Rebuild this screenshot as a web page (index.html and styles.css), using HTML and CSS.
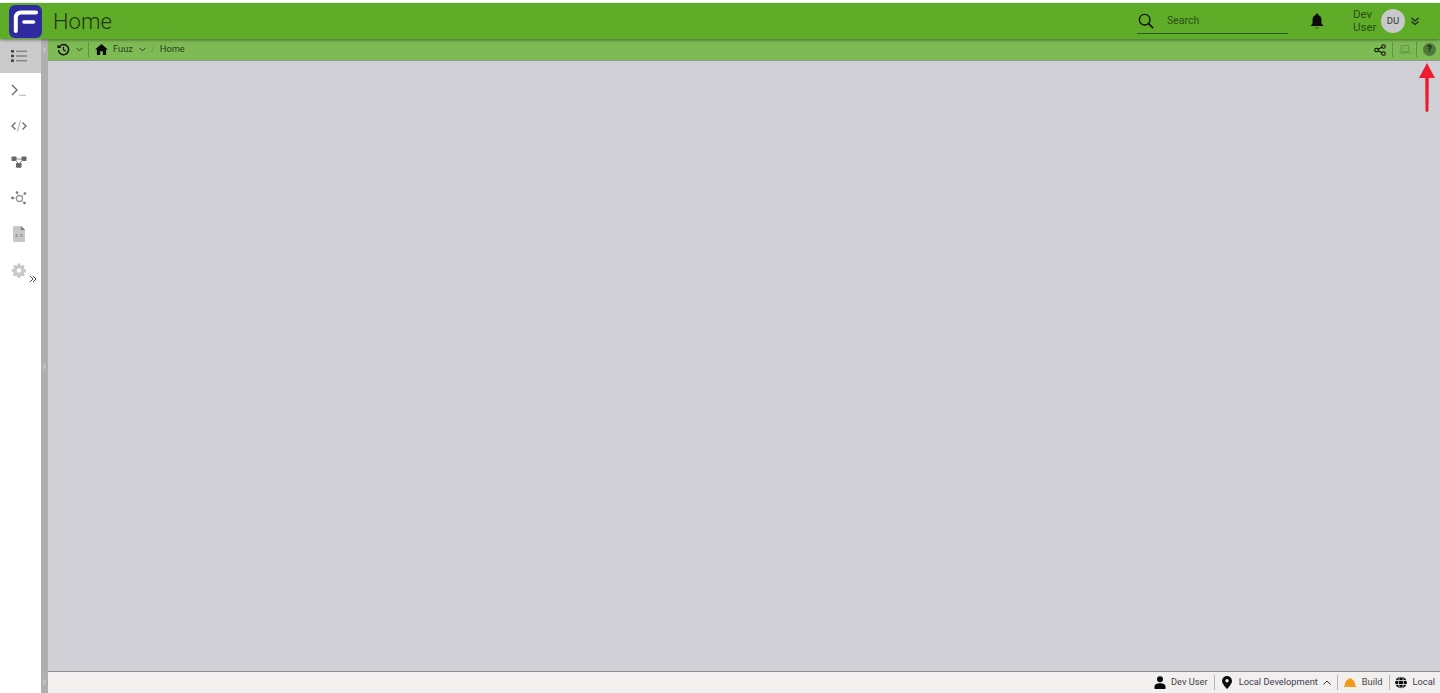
FILE: index.html
```html
<!DOCTYPE html>
<html lang="en">
<head>
  <meta charset="UTF-8" />
  <title>Fuuz — Home</title>
  <link rel="stylesheet" href="styles.css">
</head>
<body>
  <div class="header">
    <svg class="logo" viewBox="0 0 33 33">
      <rect width="33" height="33" rx="6" fill="#2e2ba0"/>
      <path d="M6.800 26V13q0-5.500 5.500-5.500H27" fill="none" stroke="#fff" stroke-width="4" stroke-linecap="round"/>
      <path d="M15 17H24.500" fill="none" stroke="#fff" stroke-width="3.600" stroke-linecap="round"/>
    </svg>
    <div class="page-title">Home</div>
    <div class="search">
      <svg class="search-icon" viewBox="0 0 18 18"><circle cx="7.500" cy="7.500" r="6" fill="none" stroke="#111" stroke-width="1.500"/><path d="M12 12l5 5" stroke="#111" stroke-width="1.800"/></svg>
      <span>Search</span>
    </div>
    <svg class="bell" viewBox="0 0 14 16"><path d="M7 0.500a1.200 1.200 0 0 1 1.200 1.400C10.500 2.500 11.500 4.500 11.500 7v3.500L13.500 13H0.500l2-2.500V7c0-2.500 1-4.500 3.300-5.100A1.200 1.200 0 0 1 7 0.500z" fill="#0c0c0c"/><path d="M5.500 14h3a1.500 1.500 0 0 1-3 0z" fill="#3a6a1a"/></svg>
    <div class="user-name">Dev<br>User</div>
    <div class="avatar">DU</div>
    <svg class="double-chev" viewBox="0 0 10 10"><path d="M1.500 2l3.500 3 3.500-3M1.500 5.500l3.500 3 3.500-3" fill="none" stroke="#222" stroke-width="1.200"/></svg>
  </div>

  <div class="content-row">
    <div class="sidebar">
      <div class="nav-item active">
        <svg viewBox="0 0 16 12"><g fill="#444"><rect x="0" y="0" width="3" height="2.500"/><rect x="0" y="4.700" width="3" height="2.500"/><rect x="0" y="9.400" width="3" height="2.500"/></g><g fill="#888"><rect x="5" y="0.500" width="11" height="1.600"/><rect x="5" y="5.200" width="11" height="1.600"/><rect x="5" y="9.900" width="11" height="1.600"/></g></svg>
      </div>
      <div class="nav-item">
        <svg viewBox="0 0 16 12"><path d="M1 1l5 5-5 5" fill="none" stroke="#666" stroke-width="1.300"/><path d="M8 11.300h7" stroke="#bbb" stroke-width="1.200"/></svg>
      </div>
      <div class="nav-item">
        <svg viewBox="0 0 16 12"><path d="M4.500 2.500L1 6l3.500 3.500M11.500 2.500L15 6l-3.500 3.500" fill="none" stroke="#666" stroke-width="1.300"/><path d="M9.500 0.500L6.500 11.500" stroke="#aaa" stroke-width="1"/></svg>
      </div>
      <div class="nav-item">
        <svg viewBox="0 0 16 12"><g fill="#666"><rect x="0.500" y="0.500" width="5" height="4.500" rx="0.800"/><rect x="10.500" y="0.500" width="5" height="4.500" rx="0.800"/><rect x="5" y="7" width="5.500" height="4.800" rx="0.800"/></g><path d="M5 3h6M4 4l3 3M12 4l-3 3" stroke="#888" stroke-width="1"/></svg>
      </div>
      <div class="nav-item tall">
        <svg viewBox="0 0 16 14"><circle cx="8.500" cy="7.500" r="3" fill="none" stroke="#999" stroke-width="1.300"/><path d="M2 7h3.500M6 2l1.500 3M13.500 3l-3 2.500M13 11.500l-2.500-2" stroke="#aaa" stroke-width="0.800"/><g fill="#777"><circle cx="1.500" cy="7" r="1.400"/><circle cx="6" cy="1.500" r="1.300"/><circle cx="14" cy="2.500" r="1.300"/><circle cx="13.500" cy="12" r="1.300"/></g></svg>
      </div>
      <div class="nav-item">
        <svg viewBox="0 0 12 16" class="doc-icon"><path d="M1 0h7l4 4v11a1 1 0 0 1-1 1H1a1 1 0 0 1-1-1V1a1 1 0 0 1 1-1z" fill="#c8c8c8"/><path d="M8 0l4 4H8z" fill="#777"/><path d="M4.500 8L3 9.500 4.500 11M7.500 8L9 9.500 7.500 11" fill="none" stroke="#666" stroke-width="0.900"/></svg>
      </div>
      <div class="nav-item">
        <svg viewBox="0 0 16 16" class="gear-icon"><path d="M6.500 0h3l.4 2.100 1.500.7L13.300 1.600l2.100 2.100-1.200 1.900.7 1.500 2.100.4v3l-2.100.4-.7 1.500 1.200 1.900-2.100 2.100-1.900-1.200-1.500.7-.4 2.100h-3l-.4-2.100-1.500-.7-1.900 1.200L.4 14.200l1.200-1.900-.7-1.500L-1 10.400v-3l2.100-.4.700-1.500L.6 3.700l2.100-2.100 1.900 1.200 1.500-.7z" transform="translate(1.500 1.500) scale(.8)" fill="#c8c8c8"/><circle cx="8" cy="8.500" r="2.300" fill="#fff"/></svg>
      </div>
      <svg class="sidebar-expand" viewBox="0 0 8 8"><path d="M1 1l3 3-3 3M4 1l3 3-3 3" fill="none" stroke="#444" stroke-width="1"/></svg>
    </div>

    <div class="strip">
      <span class="strip-arrow top">›</span>
      <span class="strip-arrow mid">›</span>
      <span class="strip-arrow bottom">›</span>
    </div>

    <div class="main">
      <div class="toolbar">
        <svg class="tb-history" viewBox="0 0 14 14"><path d="M2.500 4A5.500 5.500 0 1 1 1.500 7.500" fill="none" stroke="#111" stroke-width="1.500"/><path d="M0.500 1.500L5 5.500 0.500 5.500z" fill="#111"/><path d="M7 4v3.500l2.500 1.500" fill="none" stroke="#111" stroke-width="1.300"/></svg>
        <svg class="chev" viewBox="0 0 8 5"><path d="M0.500 0.500L4 4l3.500-3.500" fill="none" stroke="#333" stroke-width="1.100"/></svg>
        <div class="tb-sep"></div>
        <svg class="tb-home" viewBox="0 0 14 12"><path d="M7 0L0 6h2v6h3.500V8h3v4H12V6h2z" fill="#0a0a0a"/></svg>
        <span class="crumb">Fuuz</span>
        <svg class="chev crumb-chev" viewBox="0 0 8 5"><path d="M0.500 0.500L4 4l3.500-3.500" fill="none" stroke="#333" stroke-width="1.100"/></svg>
        <span class="crumb-slash">/</span>
        <span class="crumb">Home</span>
        <div class="toolbar-right">
          <svg class="tb-share" viewBox="0 0 12 12"><g fill="none" stroke="#111" stroke-width="1.100"><circle cx="2.500" cy="6" r="1.800"/><circle cx="9.500" cy="2.500" r="1.800"/><circle cx="9.500" cy="9.500" r="1.800"/><path d="M4 5.200l4-2M4 6.800l4 2"/></g></svg>
          <div class="tb-sep"></div>
          <svg class="tb-laptop" viewBox="0 0 14 10"><path d="M2.500 0.500h9v7h-9z" fill="none" stroke="#5c8f45" stroke-width="1"/><path d="M0 8.500h14v1H0z" fill="#5c8f45"/><path d="M5 3v1.500M9 3v1.500" stroke="#5c8f45"/></svg>
          <div class="tb-sep"></div>
          <div class="help">?</div>
        </div>
      </div>

      <div class="canvas"></div>

      <div class="footer">
        <div class="foot-item foot-user">
          <svg class="foot-icon" viewBox="0 0 12 13"><circle cx="6" cy="3.200" r="3" fill="#0a0a0a"/><path d="M0.500 13v-2.500C0.500 8.500 3 7.300 6 7.300s5.500 1.200 5.500 3.200V13z" fill="#0a0a0a"/></svg>
          <span>Dev User</span>
        </div>
        <div class="foot-item">
          <svg class="foot-icon" viewBox="0 0 10 13"><path d="M5 0a5 5 0 0 1 5 5c0 3-5 8-5 8S0 8 0 5a5 5 0 0 1 5-5z" fill="#0a0a0a"/><circle cx="5" cy="4.800" r="1.700" fill="#f1f0ee"/></svg>
          <span class="foot-env">Local Development</span>
          <svg class="foot-chev" viewBox="0 0 8 5"><path d="M0.500 4.500L4 1l3.500 3.500" fill="none" stroke="#333" stroke-width="1"/></svg>
        </div>
        <div class="foot-item foot-build">
          <svg class="foot-icon" viewBox="0 0 13 13"><path d="M1 10V8.500C1 5.500 2.800 3.500 5 3V2h3v1c2.200.5 4 2.500 4 5.500V10z" fill="#f29a18"/><rect x="0" y="9.500" width="13" height="2" rx="1" fill="#f29a18"/></svg>
          <span>Build</span>
        </div>
        <div class="foot-item foot-local">
          <svg class="foot-icon" viewBox="0 0 12 12"><circle cx="6" cy="6" r="5.800" fill="#0a0a0a"/><g fill="none" stroke="#f1f0ee" stroke-width="0.800"><ellipse cx="6" cy="6" rx="2.500" ry="5.800"/><path d="M0 4h12M0 8h12"/></g></svg>
          <span class="foot-env">Local</span>
        </div>
      </div>
    </div>
  </div>

  <svg class="red-arrow" viewBox="0 0 16 50"><path d="M8 0L16 15H9.800L9.500 48q-1.500 2-3 0L6.200 15H0z" fill="#ee1c2e"/></svg>
</body>
</html>
```

FILE: styles.css
```css
html, body {
  height: 100%;
}
body {
  margin: 0;
  height: 693px;
  overflow: hidden;
  display: flex;
  flex-direction: column;
  padding-top: 3px;
  box-sizing: border-box;
  background-color: #fff;
  font-family: Roboto, "Liberation Sans", sans-serif;
  color: #222;
}
svg {
  display: block;
  flex-shrink: 0;
}

/* top bar */
.header {
  height: 36px;
  flex-shrink: 0;
  display: flex;
  align-items: center;
  background-color: #5fac28;
  box-shadow: 0 1px 3px rgba(0, 0, 0, 0.45);
  position: relative;
  z-index: 2;
}
.logo {
  width: 33px;
  height: 33px;
  margin-left: 9px;
}
.page-title {
  font-size: 22px;
  font-weight: 300;
  margin-left: 11px;
  color: #1f3514;
}
.search {
  margin-left: auto;
  width: 151px;
  height: 25px;
  display: flex;
  align-items: center;
  gap: 13px;
  border-bottom: 1px solid #2d5a14;
  font-size: 10.500px;
  color: #2c4f1a;
}
.search-icon {
  width: 16px;
  height: 16px;
  margin-left: 1px;
}
.bell {
  width: 14px;
  height: 16px;
  margin-left: 22px;
}
.user-name {
  width: 23px;
  margin-left: 29px;
  font-size: 11.500px;
  line-height: 13px;
  color: #2c4f1a;
}
.avatar {
  width: 24px;
  height: 24px;
  margin-left: 5px;
  border-radius: 50%;
  background-color: #c9c9cb;
  font-size: 9.500px;
  line-height: 24px;
  text-align: center;
  color: #333;
}
.double-chev {
  width: 10px;
  height: 10px;
  margin: 0 20px 0 5px;
}

/* body area */
.content-row {
  flex: 1;
  min-height: 0;
  display: flex;
}
.sidebar {
  width: 41px;
  flex-shrink: 0;
  position: relative;
  background-color: #fff;
}
.nav-item {
  height: 36px;
  box-sizing: border-box;
  padding: 0 3px 2px 0;
  display: flex;
  align-items: center;
  justify-content: center;
}
.nav-item svg {
  width: 16px;
  height: 12px;
}
.nav-item.active {
  height: 34px;
  padding-bottom: 0;
  background-color: #cbcbcb;
}
.nav-item.tall svg {
  height: 14px;
}
.nav-item .doc-icon {
  width: 12px;
  height: 16px;
}
.nav-item .gear-icon {
  width: 16px;
  height: 16px;
}
.sidebar-expand {
  position: absolute;
  left: 29px;
  top: 236px;
  width: 8px;
  height: 8px;
}
.strip {
  width: 7px;
  flex-shrink: 0;
  position: relative;
  background-color: #afafaf;
}
.strip-arrow {
  position: absolute;
  left: 1px;
  font-size: 14px;
  line-height: 14px;
  color: #cfcfcf;
}
.strip-arrow.top { top: 3px; }
.strip-arrow.mid { top: 319px; }
.strip-arrow.bottom { top: 635px; }

.main {
  flex: 1;
  min-width: 0;
  display: flex;
  flex-direction: column;
}

/* breadcrumb bar */
.toolbar {
  height: 21px;
  flex-shrink: 0;
  display: flex;
  align-items: center;
  padding-left: 9px;
  background-color: #7ebb54;
  border-bottom: 1px solid #8f9b8b;
  font-size: 9.300px;
  color: #2c3d20;
}
.tb-history {
  width: 13px;
  height: 13px;
}
.chev {
  width: 7px;
  height: 5px;
  margin-left: 6px;
}
.tb-sep {
  width: 1px;
  height: 15px;
  margin: 0 6px 0 5px;
  background-color: #5e9440;
}
.tb-home {
  width: 13px;
  height: 11px;
  margin-right: 5px;
}
.crumb {
  margin-top: -2px;
}
.crumb-chev {
  margin-left: 6px;
}
.crumb-slash {
  margin: -2px 5px 0 5px;
  color: #6b8f55;
}
.toolbar-right {
  margin-left: auto;
  display: flex;
  align-items: center;
  padding-right: 4px;
}
.tb-share {
  width: 12px;
  height: 12px;
}
.tb-laptop {
  width: 12px;
  height: 9px;
}
.help {
  width: 13px;
  height: 13px;
  border-radius: 50%;
  background-color: #4d7a3a;
  font-size: 9px;
  font-weight: 700;
  line-height: 13px;
  text-align: center;
  color: #152510;
}
.toolbar-right .tb-sep {
  margin: 0 6px;
}
.toolbar-right .tb-laptop + .tb-sep {
  margin-left: 5px;
}

.canvas {
  flex: 1;
  background-color: #d1d0d6;
}

/* status bar */
.footer {
  height: 21px;
  flex-shrink: 0;
  display: flex;
  align-items: center;
  justify-content: flex-end;
  padding-right: 5px;
  background-color: #f1f0ee;
  border-top: 1px solid #8e8e92;
  font-size: 9.300px;
  color: #444;
}
.foot-item {
  display: flex;
  align-items: center;
  height: 15px;
  padding: 0 7px 0 6px;
  border-left: 1px solid #b5b5b5;
}
.foot-item:first-child {
  border-left: none;
}
.foot-item:last-child {
  padding-right: 0;
}
.foot-item span {
  margin-top: -2px;
}
.foot-icon {
  width: 12px;
  height: 13px;
  margin-right: 6px;
}
.foot-user {
  padding-right: 6px;
}
.foot-user .foot-icon {
  margin-right: 5px;
}
.foot-build {
  padding-right: 6px;
}
.foot-local {
  padding-left: 5px;
}
.foot-env {
  color: #3f3a55;
}
.foot-chev {
  width: 8px;
  height: 5px;
  margin-left: 5px;
  margin-right: -1px;
}

/* annotation drawn over the screenshot */
.red-arrow {
  position: absolute;
  left: 1419px;
  top: 63px;
  width: 16px;
  height: 50px;
  z-index: 3;
}
```
